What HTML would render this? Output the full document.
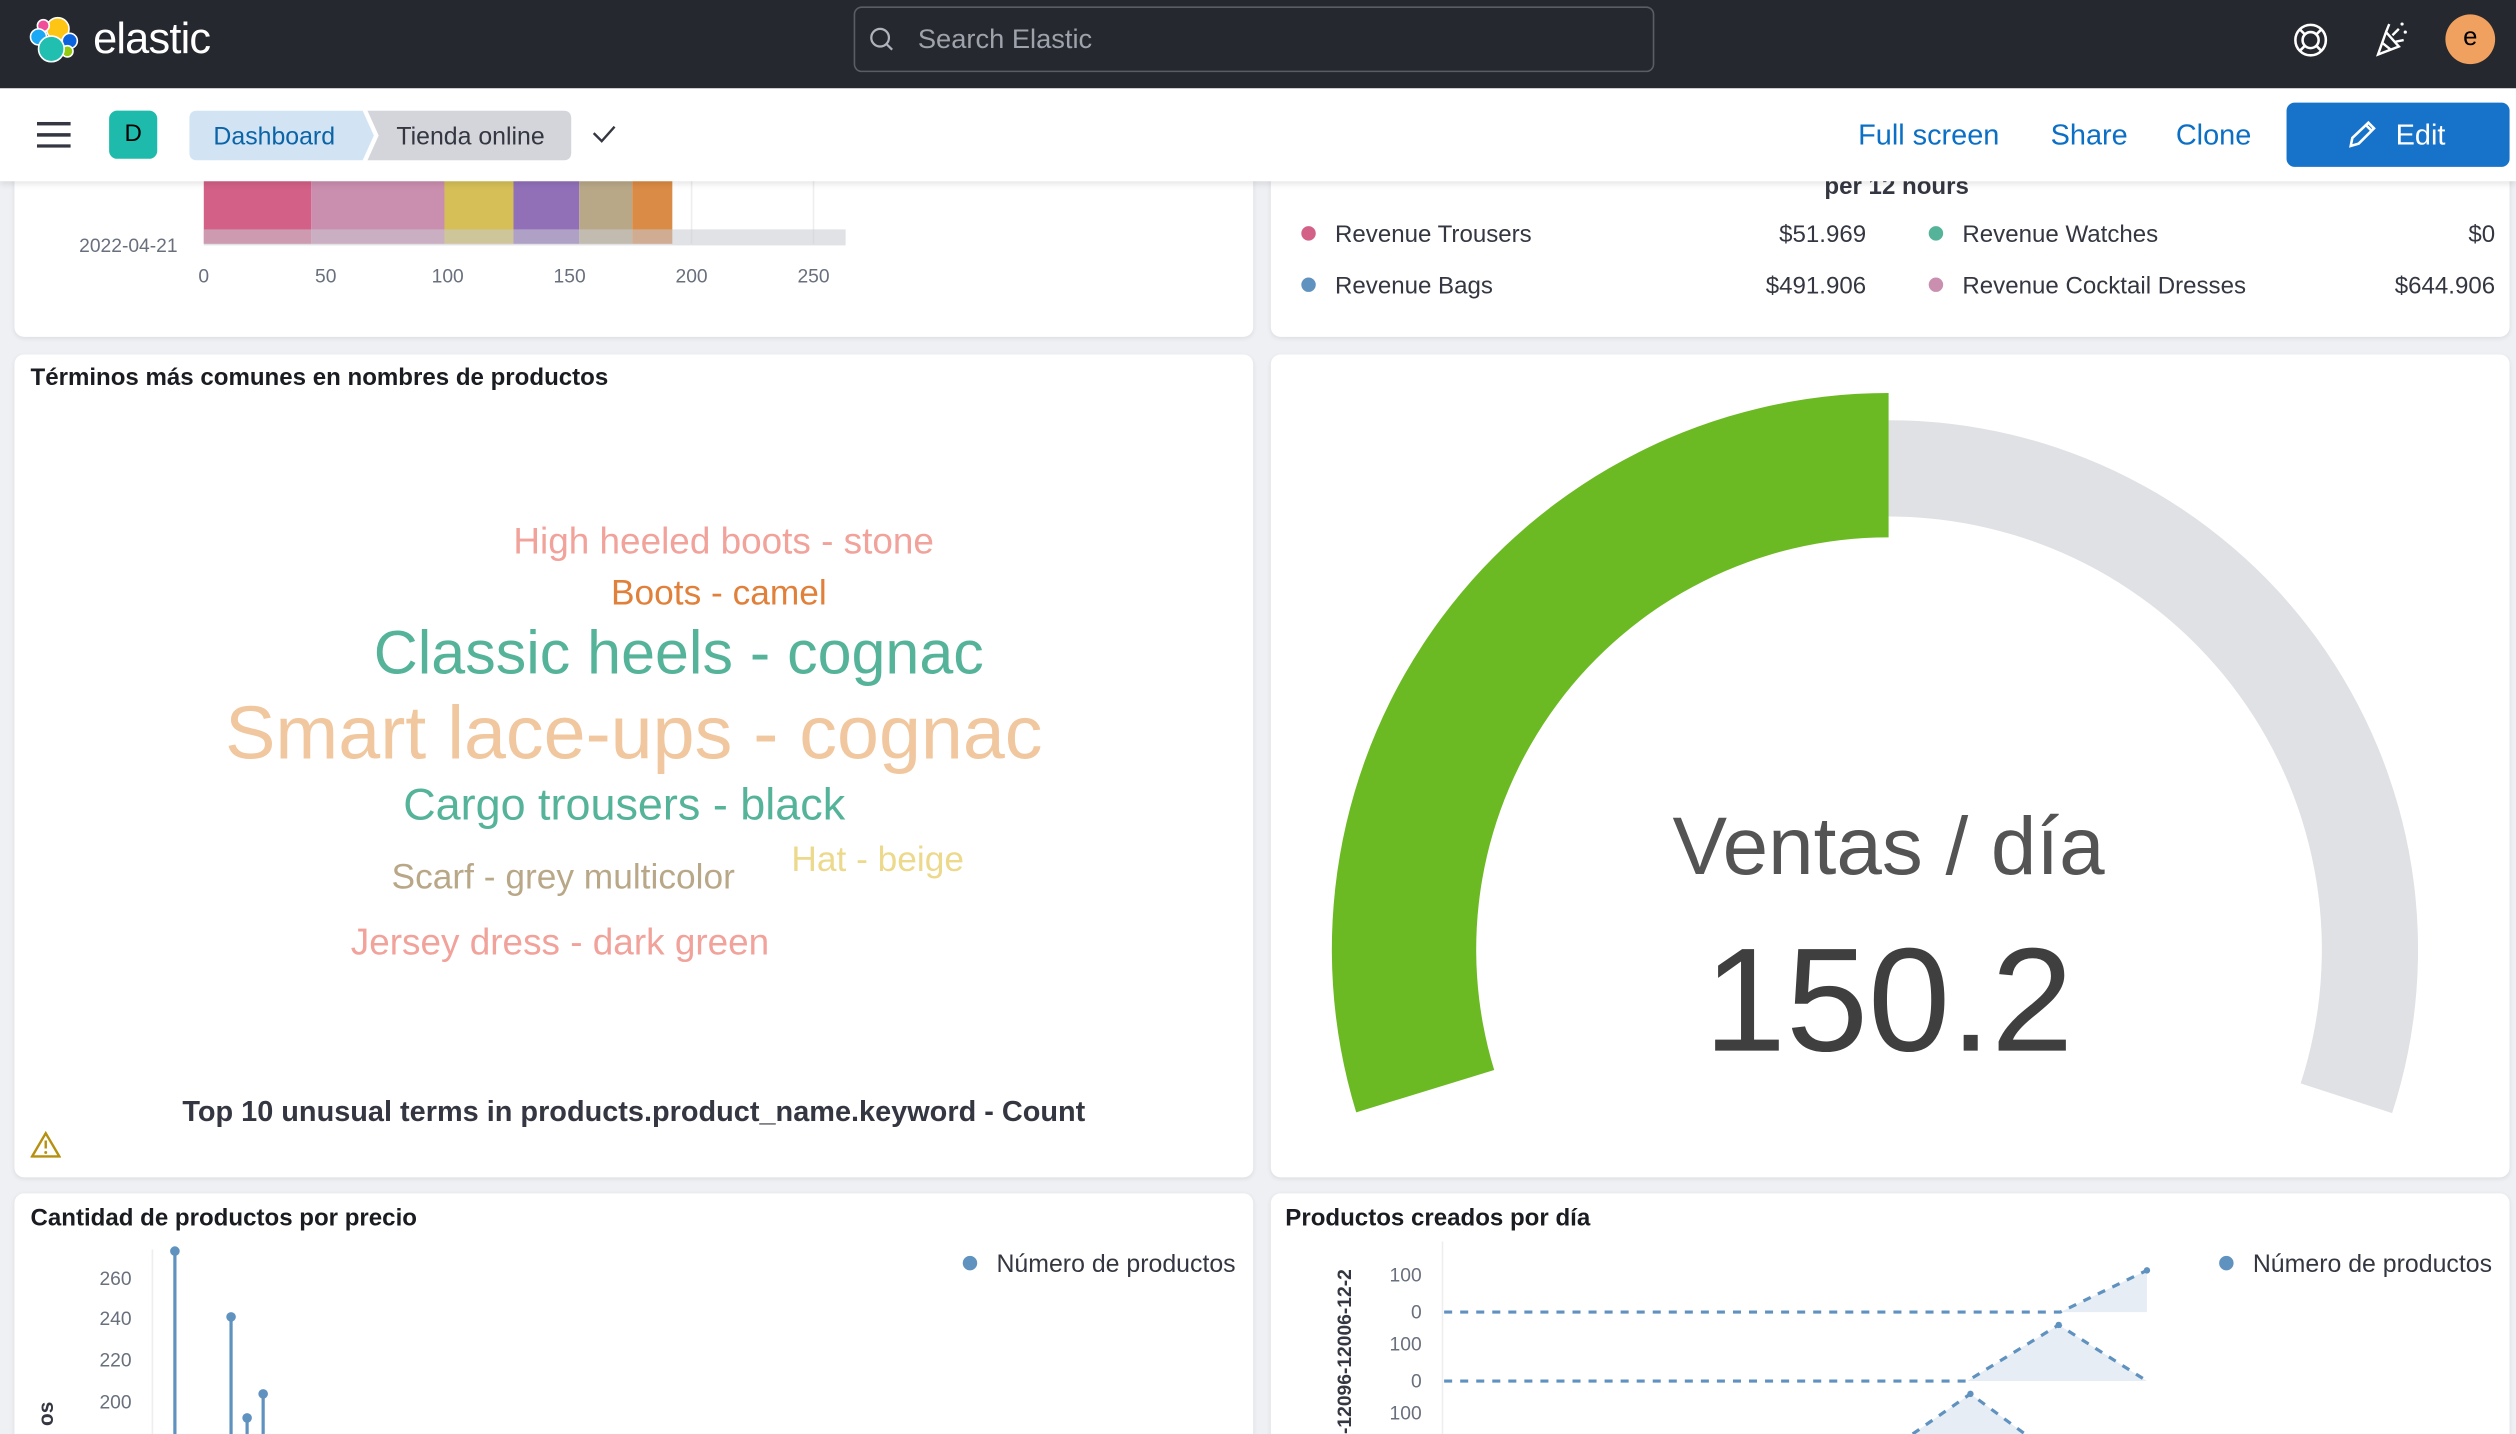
<!DOCTYPE html>
<html><head><meta charset="utf-8"><style>
html,body{margin:0;padding:0;width:2516px;height:1434px;overflow:hidden;background:#eef0f4;}
#s{position:absolute;left:0;top:0;width:1568px;height:894px;transform:scale(1.60459,1.604);transform-origin:0 0;font-family:"Liberation Sans",sans-serif;background:#eef0f4;overflow:hidden;}
.a{position:absolute;}
.p{position:absolute;background:#fff;border-radius:6px;box-shadow:0 1px 3px rgba(0,0,0,.08);}
.t{position:absolute;font-weight:bold;font-size:15px;color:#1a1c21;}
.w{position:absolute;white-space:nowrap;transform:translateX(-50%);}
.lg{position:absolute;font-size:15px;color:#343741;white-space:nowrap;}
.r{position:absolute;font-size:15px;color:#343741;text-align:right;width:100px;}
.dot{display:inline-block;width:9px;height:9px;border-radius:50%;margin-right:12px;vertical-align:1px;}
</style></head><body><div id="s">
<!-- panels -->
<div class="p" style="left:9px;top:80px;width:772px;height:130px"></div>
<div class="p" style="left:792px;top:80px;width:772px;height:130px"></div>
<div class="p" style="left:9px;top:221px;width:772px;height:513px"></div>
<div class="p" style="left:792px;top:221px;width:772px;height:513px"></div>
<div class="p" style="left:9px;top:744px;width:772px;height:170px"></div>
<div class="p" style="left:792px;top:744px;width:772px;height:170px"></div>

<!-- top-left bar chart -->
<svg class="a" style="left:0;top:0" width="790" height="215">
<line x1="431" y1="100" x2="431" y2="152" stroke="#eee"/><line x1="507" y1="100" x2="507" y2="152" stroke="#eee"/>
<rect x="127" y="100" width="67" height="52" fill="#d36086"/>
<rect x="194" y="100" width="83" height="52" fill="#ca8eae"/>
<rect x="277" y="100" width="43" height="52" fill="#d6bf57"/>
<rect x="320" y="100" width="41" height="52" fill="#9170b8"/>
<rect x="361" y="100" width="33" height="52" fill="#b9a888"/>
<rect x="394" y="100" width="25" height="52" fill="#da8b45"/>
<rect x="127" y="143" width="400" height="10" fill="#c8cbd2" opacity=".55"/>
<g font-size="12" fill="#69707d" font-family="Liberation Sans" text-anchor="middle">
<text x="80" y="157">2022-04-21</text>
<text x="127" y="176">0</text><text x="203" y="176">50</text><text x="279" y="176">100</text><text x="355" y="176">150</text><text x="431" y="176">200</text><text x="507" y="176">250</text></g>
</svg>
<!-- top-right legend -->
<div class="a" style="left:1137px;top:108px;font-size:15px;font-weight:bold;color:#343741">per 12 hours</div>
<div class="lg" style="left:811px;top:138px"><span class="dot" style="background:#d36086"></span>Revenue Trousers</div>
<div class="r" style="left:1063px;top:138px">$51.969</div>
<div class="lg" style="left:1202px;top:138px"><span class="dot" style="background:#54b399"></span>Revenue Watches</div>
<div class="r" style="left:1455px;top:138px">$0</div>
<div class="lg" style="left:811px;top:170px"><span class="dot" style="background:#6092c0"></span>Revenue Bags</div>
<div class="r" style="left:1063px;top:170px">$491.906</div>
<div class="lg" style="left:1202px;top:170px"><span class="dot" style="background:#ca8eae"></span>Revenue Cocktail Dresses</div>
<div class="r" style="left:1455px;top:170px">$644.906</div>

<!-- word cloud -->
<div class="t" style="left:19px;top:227px">Términos más comunes en nombres de productos</div>
<div class="w" style="left:451px;top:324px;font-size:23px;color:#f1a29a">High heeled boots - stone</div>
<div class="w" style="left:448px;top:357px;font-size:22px;color:#e0803a">Boots - camel</div>
<div class="w" style="left:423px;top:387px;font-size:38px;color:#54b399">Classic heels - cognac</div>
<div class="w" style="left:395px;top:429px;font-size:47px;color:#f0c79e">Smart lace-ups - cognac</div>
<div class="w" style="left:389px;top:486px;font-size:28px;color:#54b399">Cargo trousers - black</div>
<div class="w" style="left:351px;top:534px;font-size:22px;color:#b9a888">Scarf - grey multicolor</div>
<div class="w" style="left:547px;top:523px;font-size:22px;color:#ecd98c">Hat - beige</div>
<div class="w" style="left:349px;top:574px;font-size:23px;color:#f1a29a">Jersey dress - dark green</div>
<div class="w" style="left:395px;top:683px;font-size:18px;font-weight:bold;color:#343741">Top 10 unusual terms in products.product_name.keyword - Count</div>
<svg class="a" style="left:19px;top:705px" width="19" height="17"><path d="M9.5 1.5 L18 16 L1 16 Z" fill="none" stroke="#b5910f" stroke-width="1.5"/><line x1="9.5" y1="6" x2="9.5" y2="11" stroke="#b5910f" stroke-width="1.5"/><circle cx="9.5" cy="13.5" r=".9" fill="#b5910f"/></svg>

<!-- gauge -->
<svg class="a" style="left:0;top:0" width="1568" height="894">
<path d="M1177,262 A330,330 0 0 1 1490.8,694 L1433.8,675.4 A270,270 0 0 0 1177,322 Z" fill="#e0e1e5"/>
<path d="M845.2,693.5 A347,347 0 0 1 1177,245 L1177,335 A257,257 0 0 0 931.2,667.1 Z" fill="#6cba23"/>
<text x="1177" y="545" text-anchor="middle" font-family="Liberation Sans" font-size="51" fill="#545454">Ventas / día</text>
<text x="1177" y="655" text-anchor="middle" font-family="Liberation Sans" font-size="92" fill="#3f3f3f">150.2</text>
</svg>

<!-- bottom left -->
<div class="t" style="left:19px;top:751px">Cantidad de productos por precio</div>
<div class="lg" style="left:600px;top:780px;font-size:15.5px"><span class="dot" style="background:#6092c0"></span>Número de productos</div>
<svg class="a" style="left:0;top:744px" width="790" height="150">
<g font-size="12" fill="#69707d" font-family="Liberation Sans" text-anchor="end"><text x="82" y="57">260</text><text x="82" y="82">240</text><text x="82" y="108">220</text><text x="82" y="134">200</text></g>
<line x1="95" y1="35" x2="95" y2="150" stroke="#eee"/>
<g stroke="#6092c0" stroke-width="2" fill="#6092c0"><line x1="109" y1="36" x2="109" y2="150"/><circle cx="109" cy="36" r="2"/><line x1="144" y1="77" x2="144" y2="150"/><circle cx="144" cy="77" r="2"/><line x1="154" y1="140" x2="154" y2="150"/><circle cx="154" cy="140" r="2"/><line x1="164" y1="125" x2="164" y2="150"/><circle cx="164" cy="125" r="2"/></g>
<text x="33" y="145" font-size="13" font-weight="bold" fill="#343741" transform="rotate(-90 33 145)">os</text>
</svg>

<!-- bottom right -->
<div class="t" style="left:801px;top:751px">Productos creados por día</div>
<div class="lg" style="left:1383px;top:780px;font-size:15.5px"><span class="dot" style="background:#6092c0"></span>Número de productos</div>
<svg class="a" style="left:792px;top:744px" width="772" height="150">
<text x="50" y="150" font-size="12" font-weight="bold" fill="#343741" font-family="Liberation Sans" transform="rotate(-90 50 150)">-12096-12006-12-2</text>
<g font-size="12" fill="#69707d" font-family="Liberation Sans" text-anchor="end"><text x="94" y="55">100</text><text x="94" y="78">0</text><text x="94" y="98">100</text><text x="94" y="121">0</text><text x="94" y="141">100</text></g>
<line x1="107" y1="30" x2="107" y2="150" stroke="#eee"/>
<path d="M492,74 L546,48 L546,74 Z" fill="#e6edf5"/>
<path d="M434,117 L491,82 L546,117 Z" fill="#e6edf5"/>
<path d="M400,150 L436,125 L470,150 Z" fill="#e6edf5"/>
<g stroke="#6092c0" stroke-width="2" fill="none" stroke-dasharray="5,5"><path d="M108,74 L492,74 L546,48"/><path d="M108,117 L434,117 L491,82 L546,117"/><path d="M400,150 L436,125 L470,150"/></g>
<circle cx="546" cy="48" r="2" fill="#6092c0"/><circle cx="491" cy="82" r="2" fill="#6092c0"/><circle cx="436" cy="125" r="2" fill="#6092c0"/>
</svg>

<!-- second bar -->
<div class="a" style="left:0;top:55px;width:1568px;height:58px;background:#fff;box-shadow:0 2px 4px rgba(0,0,0,.1)"></div>
<svg class="a" style="left:23px;top:76px" width="22" height="16"><g fill="#343741"><rect y="0" width="21" height="2.2"/><rect y="7" width="21" height="2.2"/><rect y="14" width="21" height="2.2"/></g></svg>
<div class="a" style="left:68px;top:69px;width:30px;height:30px;border-radius:5px;background:#1ebbac;color:#000;font-size:15px;text-align:center;line-height:30px">D</div>
<svg class="a" style="left:118px;top:69px" width="270" height="31">
<path d="M111,0 H233 Q238,0 238,5 V26 Q238,31 233,31 H111 L118,15.5 Z" fill="#d3d5da"/>
<path d="M5,0 H108 L115,15.5 L108,31 H5 Q0,31 0,26 V5 Q0,0 5,0 Z" fill="#d2e4f3"/>
<text x="15" y="21" font-size="15.5" fill="#0b64a8" font-family="Liberation Sans">Dashboard</text>
<text x="129" y="21" font-size="15.5" fill="#343741" font-family="Liberation Sans">Tienda online</text>
<path d="M252,14 L257,19 L265,10" stroke="#343741" stroke-width="1.5" fill="none"/>
</svg>
<div class="a" style="left:1158px;top:74px;font-size:18px;color:#0b6fc5">Full screen</div>
<div class="a" style="left:1278px;top:74px;font-size:18px;color:#0b6fc5">Share</div>
<div class="a" style="left:1356px;top:74px;font-size:18px;color:#0b6fc5">Clone</div>
<div class="a" style="left:1425px;top:64px;width:139px;height:40px;background:#1773c9;border-radius:5px;color:#fff;font-size:18px;line-height:40px"><svg style="position:absolute;left:38px;top:11px" width="18" height="18"><path d="M2,16 L3,11 L13,1.5 L16.5,5 L7,14.5 Z M11.5,3 L15,6.5" stroke="#fff" stroke-width="1.6" fill="none"/></svg><span style="position:absolute;left:68px">Edit</span></div>

<!-- header -->
<div class="a" style="left:0;top:0;width:1568px;height:55px;background:#25282f"></div>
<svg class="a" style="left:0;top:0" width="60" height="50">
<g stroke="#fff" stroke-width="1">
<circle cx="36" cy="18" r="7" fill="#fec514"/>
<circle cx="27" cy="16" r="3.7" fill="#f04e98"/>
<circle cx="24" cy="23" r="5" fill="#1ba9f5"/>
<circle cx="43.5" cy="25.5" r="4.7" fill="#0b64dd"/>
<circle cx="42" cy="32" r="3.5" fill="#93c90e"/>
<circle cx="32" cy="30.5" r="8" fill="#20bfb0"/>
</g></svg>
<div class="a" style="left:58px;top:9px;font-size:27px;color:#fff;letter-spacing:-.5px">elastic</div>
<div class="a" style="left:532px;top:4px;width:497px;height:39px;border:1px solid #5a5d66;border-radius:5px;background:#25282f"></div>
<svg class="a" style="left:541px;top:16px" width="18" height="18"><circle cx="7.5" cy="7.5" r="5.5" stroke="#b0b3bb" stroke-width="1.4" fill="none"/><line x1="11.5" y1="11.5" x2="15" y2="15" stroke="#b0b3bb" stroke-width="1.4"/></svg>
<div class="a" style="left:572px;top:15px;font-size:17px;color:#9ea2aa">Search Elastic</div>
<svg class="a" style="left:1428px;top:13px" width="24" height="24"><circle cx="12" cy="12" r="9.5" stroke="#fff" stroke-width="1.6" fill="none"/><circle cx="12" cy="12" r="5" stroke="#fff" stroke-width="1.6" fill="none"/><path d="M5,5 L8.5,8.5 M19,5 L15.5,8.5 M5,19 L8.5,15.5 M19,19 L15.5,15.5" stroke="#fff" stroke-width="1.6"/></svg>
<svg class="a" style="left:1478px;top:12px" width="24" height="26"><path d="M4,22 L9,8 L17,17 Z M7,15 L12,19 M9,8 L11,3 M13,10 L17,6 M15,14 L20,13" stroke="#fff" stroke-width="1.5" fill="none"/><circle cx="19" cy="3" r="1" fill="#fff"/><circle cx="21" cy="8" r="1" fill="#fff"/></svg>
<div class="a" style="left:1524px;top:9px;width:31px;height:31px;border-radius:50%;background:#f0a15f;color:#000;font-size:16px;text-align:center;line-height:30px">e</div>
</div></body></html>
